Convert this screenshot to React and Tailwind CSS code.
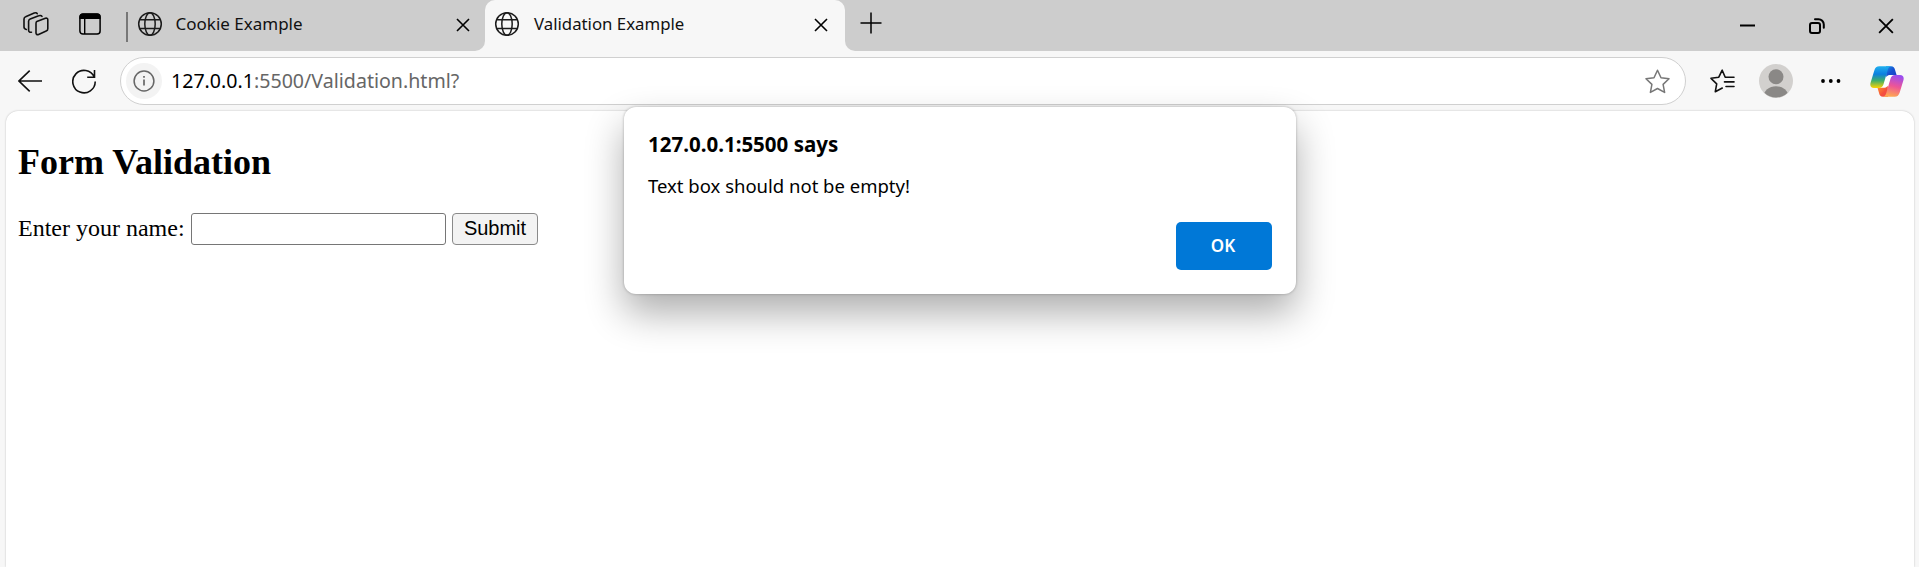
import React from "react";

const ui = "font-['Noto_Sans','Open_Sans',sans-serif]";

function Globe() {
  return (
    <svg className="h-[26px] w-[26px] shrink-0" viewBox="0 0 26 26" fill="none" stroke="#1b1b1b" strokeWidth="1.5">
      <circle cx="13" cy="13" r="11.3" />
      <ellipse cx="13" cy="13" rx="5.2" ry="11.3" />
      <path d="M2.6 8.8h20.8M2.6 17.6h20.8" />
    </svg>
  );
}

function Cross({ className }) {
  return (
    <svg className={className} viewBox="0 0 14 14" fill="none" stroke="#000" strokeWidth="1.6">
      <path d="M1 1l12 12M13 1L1 13" />
    </svg>
  );
}

function Workspaces() {
  return (
    <svg className="h-[26px] w-[26px]" viewBox="0 0 26 26" fill="none" stroke="#111" strokeWidth="1.6" strokeLinejoin="round" strokeLinecap="round">
      <path d="M13.8 10.400l8.600-3.100c1.500-.5 2.400.1 2.400 1.500v9c0 1.200-.5 1.900-1.600 2.300l-7.600 3.300c-1.500.6-2.600 0-2.600-1.500v-9.200c0-1.200-.1-1.900.8-2.300z" />
      <path d="M8.500 21.200c-2 .2-2.900-.5-2.900-2v-9c0-1.200.5-1.900 1.600-2.300l8.500-3.100c1.500-.6 2.600-.500 3.300.6" />
      <path d="M3.300 18.500c-1.600-.3-2.300-1-2.300-2.400V8c0-1.200.5-1.900 1.600-2.300l8.600-3.600c1.600-.6 2.500-.4 3 .6" />
    </svg>
  );
}

function TabActions() {
  return (
    <svg className="h-[22px] w-[22px]" viewBox="0 0 22 22" fill="none">
      <rect x=".9" y=".9" width="20.200" height="20.200" rx="3" stroke="#000" strokeWidth="1.500" />
      <path d="M.5 6V4a3.500 3.500 0 013.500-3.500h14A3.500 3.500 0 0121.500 4v2z" fill="#000" />
      <path d="M5.700 6v15" stroke="#000" strokeWidth="1.400" />
    </svg>
  );
}

function Copilot() {
  return (
    <svg className="h-[31px] w-[34px]" viewBox="0 0 34 31">
      <defs>
        <linearGradient id="cpLeft" x1="0" y1="0" x2="0" y2="1">
          <stop offset="0" stopColor="#20b0ee" />
          <stop offset=".36" stopColor="#0b7fe0" />
          <stop offset=".66" stopColor="#3fae6a" />
          <stop offset="1" stopColor="#ffd400" />
        </linearGradient>
        <linearGradient id="cpTop" x1="0" y1="0" x2="1" y2="1">
          <stop offset="0" stopColor="#1a90e8" />
          <stop offset=".5" stopColor="#1650d0" />
          <stop offset="1" stopColor="#1c3fc4" />
        </linearGradient>
        <linearGradient id="cpRight" x1=".6" y1="0" x2=".35" y2="1">
          <stop offset="0" stopColor="#9a4df0" />
          <stop offset=".5" stopColor="#ee5596" />
          <stop offset="1" stopColor="#ffac4e" />
        </linearGradient>
        <linearGradient id="cpBottom" x1="0" y1="0" x2="1" y2="1">
          <stop offset="0" stopColor="#ff9a2e" />
          <stop offset=".6" stopColor="#f5503c" />
          <stop offset="1" stopColor="#ee4458" />
        </linearGradient>
      </defs>
      <path d="M12.500 8.500h9.500l-4 13.500h-7.500z" fill="#fff" />
      <path d="M16 .3h5c2.500 0 3.400 1.400 4 3.400l1.600 5.300H21c-2 0-3.600.2-4.800 2z" fill="url(#cpTop)" />
      <path d="M18 30.700h-5c-2.500 0-3.300-1.400-3.900-3.400L7.500 21.800h5.600c2 0 3.500-.2 4.700-2z" fill="url(#cpBottom)" />
      <path d="M9.300.3h12.200c-2 0-3 1.300-3.700 3.500L13.600 18c-.8 2.600-2.200 4-4.800 4H4C1 22-.2 20 .5 17L4.300 4.500C5.200 1.700 6.600.3 9.300.3z" fill="url(#cpLeft)" />
      <path d="M24.700 30.700H12.500c2 0 3-1.300 3.700-3.500L20.400 13c.8-2.600 2.200-4 4.800-4H30c3 0 4.200 2 3.500 5l-3.800 12.500c-.9 2.800-2.300 4.200-5 4.200z" fill="url(#cpRight)" />
    </svg>
  );
}

function TabStrip() {
  return (
    <header className={`flex h-[51px] shrink-0 bg-[linear-gradient(to_bottom,#cdcdcd_50%,#f7f7f7_50%)] text-[17px] text-[#111] ${ui}`}>
      <div className="flex w-[485px] items-center rounded-br-[10px] bg-[#cdcdcd] pr-[15px] pb-[3px] pl-[23px]">
        <Workspaces />
        <div className="ml-[30px]"><TabActions /></div>
        <div className="mt-[5px] ml-[25px] h-[30px] w-[1.500px] bg-[#777]" />
        <div className="ml-[9px]"><Globe /></div>
        <span className="ml-[13px] grow whitespace-nowrap">Cookie Example</span>
        <Cross className="mt-[2px] h-[14px] w-[14px]" />
      </div>
      <div className="flex w-[360px] items-center rounded-t-[10px] bg-[#f7f7f7] pr-[17px] pb-[3px] pl-[9px]">
        <Globe />
        <span className="ml-[14px] grow text-[16.800px] whitespace-nowrap">Validation Example</span>
        <Cross className="mt-[2px] h-[14px] w-[14px]" />
      </div>
      <div className="flex grow items-center rounded-bl-[10px] bg-[#cdcdcd] pr-[25px] pl-[15px]">
        <svg className="mb-[5px] h-[22px] w-[22px]" viewBox="0 0 22 22" stroke="#000" strokeWidth="1.500">
          <path d="M.5 11h21M11 .5v21" />
        </svg>
        <div className="grow" />
        <svg className="h-[16px] w-[15px]" viewBox="0 0 15 16" stroke="#000" strokeWidth="2">
          <path d="M0 7.500h15" />
        </svg>
        <svg className="ml-[54px] h-[16px] w-[16px]" viewBox="0 0 16 16" fill="none" stroke="#000" strokeWidth="2" strokeLinecap="round">
          <rect x="1" y="5" width="10" height="10" rx="2" />
          <path d="M6 1.200h3.500a5.300 5.300 0 015.300 5.300v3.300" />
        </svg>
        <Cross className="ml-[53px] h-[16px] w-[16px]" />
      </div>
    </header>
  );
}

function Toolbar() {
  return (
    <div className="flex h-[60px] shrink-0 items-center pr-[15px] pl-[18px]">
      <svg className="mb-px h-[22px] w-[24px]" viewBox="0 0 24 22" fill="none" stroke="#111" strokeWidth="1.600">
        <path d="M11.700.7L1 11l10.700 10.300M1 11h23" />
      </svg>
      <svg className="ml-[30px] h-[25px] w-[24px]" viewBox="0 0 24 25" fill="none" stroke="#111" strokeWidth="1.600">
        <path d="M22.200 8A11.200 11.200 0 1023.200 12.500M22.500 1v7.200h-7.300" />
      </svg>
      <div className="ml-[24px] flex h-[48px] w-[1566px] items-center rounded-full border-[1.500px] border-[#d0d0d0] bg-white pr-[15px] pl-[5px]">
        <div className="flex h-9 w-9 items-center justify-center rounded-full bg-[#f3f3f3]">
          <svg className="h-[22px] w-[22px]" viewBox="0 0 22 22" fill="none" stroke="#666" strokeWidth="1.500">
            <circle cx="11" cy="11" r="9.900" />
            <path d="M11 9.500v6M11 6v1.800" strokeWidth="1.700" />
          </svg>
        </div>
        <span className={`ml-[9px] grow text-[19.600px] text-[#666] ${ui}`}>
          <span className="text-black">127.0.0.1</span>:5500/Validation.html?
        </span>
        <svg className="h-[25px] w-[25px]" viewBox="0 0 25 25" fill="none" stroke="#777" strokeWidth="1.500" strokeLinejoin="round">
          <path d="M12.500 1.300L16 8.700l8 1.100-5.900 5.600 1.500 8-7.100-3.900-7.100 3.900 1.500-8L1 9.800l8-1.100z" />
        </svg>
      </div>
      <svg className="ml-[24px] h-[24px] w-[25px]" viewBox="0 0 25 24" fill="none" stroke="#111" strokeWidth="1.600" strokeLinejoin="round" strokeLinecap="round">
        <path d="M16 8.200h-.8L12.200 1.200 8.800 8.200 1 9.300l5.700 5.500-1.400 7.900 7-3.700M16 8.200h8M14.500 12.900H24M16 17.500h8" />
      </svg>
      <svg className="ml-[24px] h-[34px] w-[34px]" viewBox="0 0 34 34">
        <clipPath id="avatar"><circle cx="17" cy="17" r="16.500" /></clipPath>
        <circle cx="17" cy="17" r="17" fill="#d2d0ce" />
        <circle cx="17" cy="12.800" r="7.500" fill="#8a8886" />
        <ellipse cx="17" cy="33" rx="12.500" ry="10.800" fill="#8a8886" clipPath="url(#avatar)" />
      </svg>
      <svg className="ml-[28px] h-[4px] w-[20px]" viewBox="0 0 20 4">
        <circle cx="2" cy="2" r="1.900" /><circle cx="9.800" cy="2" r="1.900" /><circle cx="17.500" cy="2" r="1.900" />
      </svg>
      <div className="ml-auto"><Copilot /></div>
    </div>
  );
}

function Dialog() {
  return (
    <div className={`absolute top-[107px] left-[624px] flex h-[187px] w-[672px] flex-col rounded-[12px] bg-white px-6 pt-[23px] pb-6 text-black shadow-[0_0_3px_rgba(0,0,0,0.28),0_19px_38px_rgba(0,0,0,0.32)] ${ui}`}>
      <div className="text-[20.500px] leading-[28px] font-bold">127.0.0.1:5500 says</div>
      <div className="mt-[15px] text-[18.500px] leading-[26px]">Text box should not be empty!</div>
      <button className="mt-auto flex h-12 w-24 items-center justify-center self-end rounded-[5px] bg-[#0078d7] pr-[2px] pb-px text-[17px] font-semibold text-white">OK</button>
    </div>
  );
}

export default function App() {
  return (
    <div className="relative flex h-[567px] w-[1919px] flex-col overflow-hidden bg-[#f7f7f7]">
      <TabStrip />
      <Toolbar />
      <main className="mr-[5px] ml-[6px] grow rounded-t-[12px] bg-white px-3 pt-[30px] font-['Liberation_Serif',serif] text-black shadow-[0_0_2px_rgba(0,0,0,0.25)]">
        <h2 className="text-[36px] leading-[42px] font-bold">Form Validation</h2>
        <form className="mt-[30px] flex h-8 items-center text-[24px]" onSubmit={(e) => e.preventDefault()}>
          <label htmlFor="name" className="w-[166px] pb-[3px] whitespace-nowrap">Enter your name:</label>
          <input id="name" className="ml-[7px] h-8 w-[255px] rounded-[3px] border border-[#767676] bg-white" />
          <button className="ml-[6px] h-8 w-[86px] rounded-[4px] border border-[#8a8a8a] bg-[#f3f3f3] pb-[3px] font-['Liberation_Sans',sans-serif] text-[20px] leading-[26px]">Submit</button>
        </form>
      </main>
      <Dialog />
    </div>
  );
}
